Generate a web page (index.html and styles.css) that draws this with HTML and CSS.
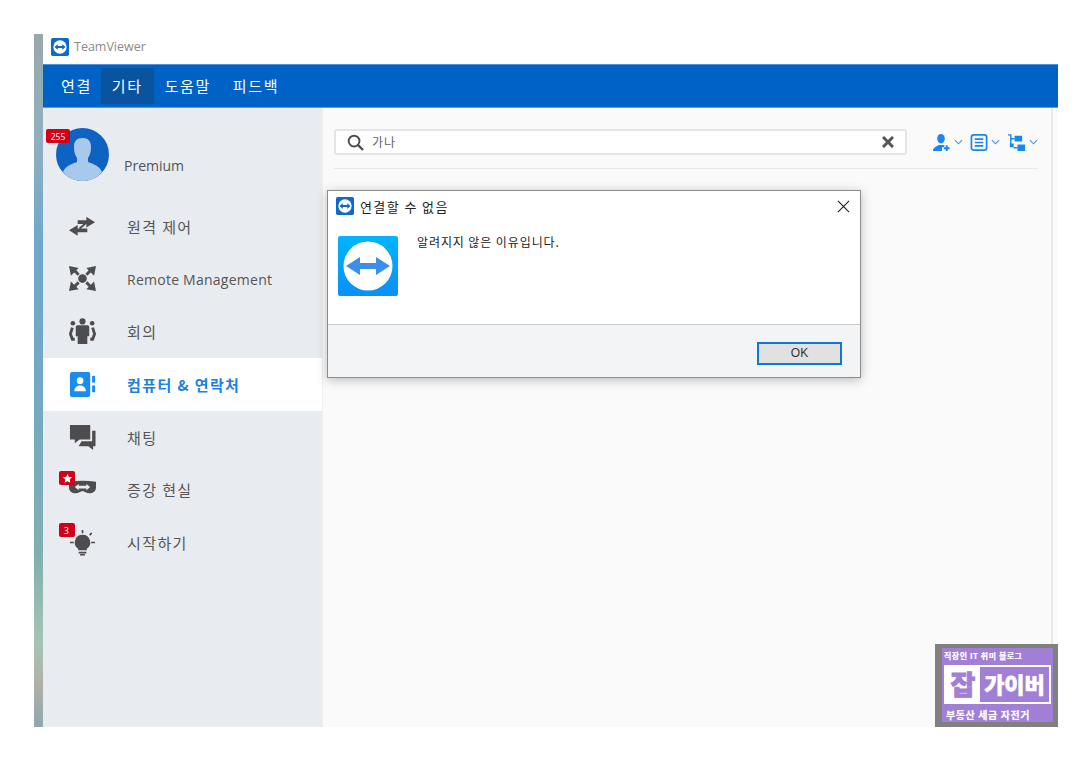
FILE: index.html
```html
<!DOCTYPE html>
<html>
<head>
    <meta charset="UTF-8">
    <title>TeamViewer</title>
    <link rel="stylesheet" href="styles.css">
</head>
<body>
    <div class="window">
        <div class="titlebar">
            <svg class="tv-small" viewBox="0 0 20 20">
                <rect width="20" height="20" rx="2" fill="#0e6ac8"/>
                <circle cx="10" cy="10" r="7.4" fill="#fff"/>
                <path d="M3.8 10 7.5 7v2h5V7l3.7 3-3.7 3v-2h-5v2z" fill="#0e6ac8"/>
            </svg>
            <span>TeamViewer</span>
        </div>
        <div class="menubar">
            <span class="menu">연결</span>
            <span class="menu active">기타</span>
            <span class="menu">도움말</span>
            <span class="menu">피드백</span>
        </div>
        <div class="content">
            <div class="sidebar">
                <div class="profile">
                    <svg class="avatar" viewBox="0 0 53 53">
                        <circle cx="26.5" cy="26.5" r="26.5" fill="#0e62c2"/>
                        <path d="M7 44c2-6 9-8 14-10v-4c-2-3-3-6-3-11 0-6 3-9 8.500-9s8.500 3 8.500 9c0 5-1 8-3 11v4c5 2 12 4 14 10-4 5-11 9-19.500 9S11 49 7 44z" fill="#a9c9ec"/>
                    </svg>
                    <span class="badge badge-count">255</span>
                    <span class="premium">Premium</span>
                </div>
                <div class="nav">
                    <div class="item">
                        <svg class="ico" viewBox="0 0 28 28">
                            <path d="M27 9.500 18 4v3.500H9v4h9V15zM0 18 9 12.500V16h10v4H9v3.500z" fill="#4d4d4f"/>
                            <path d="M11 16l6-5" stroke="#4d4d4f" stroke-width="2"/>
                        </svg>
                        <span>원격 제어</span>
                    </div>
                    <div class="item">
                        <svg class="ico" viewBox="0 0 28 28">
                            <circle cx="14" cy="13" r="4.500" fill="#4d4d4f"/>
                            <path d="M0 0l10 2-8 8zM28 0l-2 10-8-8zM0 26l2-10 8 8zM28 26l-10-2 8-8z" fill="#4d4d4f"/>
                            <path d="M5 4l5 5M23 4l-5 5M5 22l5-5M23 22l-5-5" stroke="#4d4d4f" stroke-width="3"/>
                        </svg>
                        <span class="latin">Remote Management</span>
                    </div>
                    <div class="item">
                        <svg class="ico" viewBox="0 0 28 28">
                            <circle cx="14" cy="3.500" r="3.200" fill="#4d4d4f"/>
                            <circle cx="4" cy="5.500" r="2.400" fill="#4d4d4f"/>
                            <circle cx="24" cy="5.500" r="2.400" fill="#4d4d4f"/>
                            <path d="M7 9.500c0-1.500 1-2 2-2h10c1 0 2 .5 2 2V19h-2v8H9v-8H7z" fill="#4d4d4f"/>
                            <path d="M3.500 10 1.500 16.500l2 5.500h2.500M24.500 10l2 6.500-2 5.500H22" fill="none" stroke="#4d4d4f" stroke-width="3"/>
                        </svg>
                        <span>회의</span>
                    </div>
                    <div class="item selected">
                        <svg class="ico" viewBox="0 0 28 28">
                            <rect x="1" y="1" width="21" height="26" rx="2" fill="#1a8cf0"/>
                            <rect x="24" y="5" width="3" height="7" fill="#1a8cf0"/>
                            <rect x="24" y="15" width="3" height="7" fill="#1a8cf0"/>
                            <circle cx="11.500" cy="10" r="3.500" fill="#fff"/>
                            <path d="M5.500 21c0-4 3-6 6-6s6 2 6 6z" fill="#fff"/>
                        </svg>
                        <span>컴퓨터 &amp; 연락처</span>
                    </div>
                    <div class="item">
                        <svg class="ico" viewBox="0 0 28 28">
                            <path d="M1 1h21v15H11l-5 4v-4H1z" fill="#4d4d4f"/>
                            <path d="M24 7h3.500v16H25v4l-5-4H10l3-5h11z" fill="#4d4d4f"/>
                        </svg>
                        <span>채팅</span>
                    </div>
                    <div class="item">
                        <svg class="ico" viewBox="0 0 28 28">
                            <path fill-rule="evenodd" d="M0 6c9-1.500 19-1.500 28 0v6c0 4-3 6-7 6-3 0-5-2.500-7-2.500S10 18 7 18c-4 0-7-2-7-6zM6 11.500l4 3.200V13h8v1.700l4-3.200-4-3.200V10h-8V8.300z" fill="#4d4d4f"/>
                        </svg>
                        <span class="badge badge-star">
                            <svg viewBox="0 0 12 12"><path d="M6 1l1.500 3.300 3.500.4-2.600 2.400.7 3.500L6 8.900l-3.100 1.700.7-3.500L1 4.700l3.500-.4z" fill="#fff"/></svg>
                        </span>
                        <span>증강 현실</span>
                    </div>
                    <div class="item">
                        <svg class="ico" viewBox="0 0 28 28">
                            <path d="M14 6a8 8 0 0 1 4.500 14.600V22h-9v-1.400A8 8 0 0 1 14 6z" fill="#4d4d4f"/>
                            <path d="M10 23.500h8v1.800h-8zM11.500 26h5v1.500h-5z" fill="#4d4d4f"/>
                            <path d="M14 1v3.500M1 14h4M23 14h4M21.500 6.500l2-2.500" stroke="#4d4d4f" stroke-width="1.800" fill="none"/>
                        </svg>
                        <span class="badge badge-num">3</span>
                        <span>시작하기</span>
                    </div>
                </div>
            </div>
            <div class="main">
                <div class="toolbar">
                    <div class="search">
                        <svg class="search-ico" viewBox="0 0 18 18">
                            <circle cx="7.500" cy="7.500" r="5.700" fill="none" stroke="#4d4d4f" stroke-width="2"/>
                            <path d="M11.500 11.500 17 17" stroke="#4d4d4f" stroke-width="2.400"/>
                        </svg>
                        <span class="search-text">가나</span>
                        <svg class="clear-ico" viewBox="0 0 12 12">
                            <path d="M1 1l10 10M11 1 1 11" stroke="#555" stroke-width="3"/>
                        </svg>
                    </div>
                    <div class="tools">
                        <svg class="tool" viewBox="0 0 20 20">
                            <ellipse cx="9.500" cy="6" rx="4" ry="5" fill="#1a86f0"/>
                            <path d="M1 19c0-4 4-5 6-6.500h5l1.500 1-1.500 1.500h-1.500V19z" fill="#1a86f0"/>
                            <path d="M15.500 13v6M12.500 16h6" stroke="#1a86f0" stroke-width="2"/>
                        </svg>
                        <svg class="chev" viewBox="0 0 10 6"><path d="M1 1l4 4 4-4" fill="none" stroke="#3f94e4" stroke-width="1.200"/></svg>
                        <svg class="tool" viewBox="0 0 20 20">
                            <rect x="1.500" y="2" width="16" height="16" rx="2.500" fill="none" stroke="#1a86f0" stroke-width="1.800"/>
                            <path d="M5 6.500h9M5 10h9M5 13.500h9" stroke="#1a86f0" stroke-width="1.700"/>
                        </svg>
                        <svg class="chev" viewBox="0 0 10 6"><path d="M1 1l4 4 4-4" fill="none" stroke="#3f94e4" stroke-width="1.200"/></svg>
                        <svg class="tool" viewBox="0 0 20 20">
                            <path d="M8 3h8v6H8zM11 12h8v7h-8zM3 11h4v4H3z" fill="#1a86f0"/>
                            <path d="M1 2h3v4h4M4 6v6M7 15.500h4" fill="none" stroke="#1a86f0" stroke-width="1.500"/>
                        </svg>
                        <svg class="chev" viewBox="0 0 10 6"><path d="M1 1l4 4 4-4" fill="none" stroke="#3f94e4" stroke-width="1.200"/></svg>
                    </div>
                </div>
            </div>
        </div>
    </div>

    <div class="dialog">
        <div class="dialog-title">
            <svg class="tv-small" viewBox="0 0 20 20">
                <rect width="20" height="20" rx="2" fill="#0e6ac8"/>
                <circle cx="10" cy="10" r="7.400" fill="#fff"/>
                <path d="M3.800 10 7.500 7v2h5V7l3.700 3-3.700 3v-2h-5v2z" fill="#0e6ac8"/>
            </svg>
            <span class="dialog-name">연결할 수 없음</span>
            <svg class="close" viewBox="0 0 14 14">
                <path d="M1 1l12 12M13 1 1 13" stroke="#222" stroke-width="1.200"/>
            </svg>
        </div>
        <div class="dialog-body">
            <svg class="tv-big" viewBox="0 0 60 60">
                <defs>
                    <linearGradient id="tvblue" x1="0" y1="0" x2="0" y2="1">
                        <stop offset="0" stop-color="#02b4fd"/>
                        <stop offset="1" stop-color="#0a90f7"/>
                    </linearGradient>
                </defs>
                <rect width="60" height="60" rx="2" fill="url(#tvblue)"/>
                <circle cx="30" cy="30" r="24.500" fill="#fff"/>
                <path d="M8 30 22 21v6h16v-6l14 9-14 9v-6H22v6z" fill="#3a8fec"/>
            </svg>
            <p class="dialog-msg">알려지지 않은 이유입니다.</p>
        </div>
        <div class="dialog-foot">
            <button class="ok">OK</button>
        </div>
    </div>

    <div class="stamp">
        <div class="stamp-inner">
            <div class="stamp-top">직장인 IT 취미 블로그</div>
            <div class="stamp-box">
                <span class="stamp-jab">잡</span>
                <span class="stamp-name">가이버</span>
            </div>
            <div class="stamp-bottom">부동산 세금 자전거</div>
        </div>
    </div>
</body>
</html>
```

FILE: styles.css
```css
html, body { margin: 0; padding: 0; }
body { width: 1092px; height: 761px; background: #fff; font-family: "Noto Sans CJK KR", "Noto Sans", sans-serif; position: relative; overflow: hidden; }

.window { margin: 34px 0 0 34px; width: 1024px; height: 693px; padding-left: 9px; box-sizing: border-box; display: flex; flex-direction: column; background: #fff linear-gradient(180deg, #9aa8ab 0%, #8fb0c0 15%, #6fa8cc 30%, #74a8c4 52%, #7fb0b0 75%, #a5c4b5 88%, #b0b0a5 94%, #8fa8b0 100%) no-repeat left top / 9px 100%; }

.titlebar { height: 30px; display: flex; align-items: center; padding: 0 0 5px 8px; box-sizing: border-box; gap: 5px; background: #fff; font-size: 12.500px; color: #8a8a8a; font-family: "Open Sans", sans-serif; }
.tv-small { width: 18px; height: 18px; flex: none; }

.menubar { height: 44px; box-sizing: border-box; background: #0062c4; border-top: 1px solid #4f93dc; border-bottom: 1px solid #5a9ae0; display: flex; align-items: center; padding-left: 7px; }
.menu { color: #fff; font-size: 15px; letter-spacing: 1.600px; height: 36px; line-height: 36px; padding: 0 11px; }
.menu:first-child { padding-right: 9px; }
.menu.active { background: #0a549f; }

.content { flex: 1; display: flex; min-height: 0; background: #fafafa; }
.sidebar { width: 279px; background: #e8ebf0; border-right: 1px solid #f0f0f0; flex: none; }
.profile { height: 92px; position: relative; }
.avatar { position: absolute; left: 13px; top: 20px; width: 53px; height: 53px; }
.premium { position: absolute; left: 81px; top: 48px; font-size: 14px; color: #555; font-family: "Open Sans", sans-serif; }
.badge { position: absolute; background: #d0021b; color: #fff; border-radius: 2px; display: flex; align-items: center; justify-content: center; }
.badge-count { left: 3px; top: 21px; width: 24px; height: 14px; font-size: 8.500px; font-family: "Open Sans", sans-serif; }
.badge-star { left: 16px; top: 8px; width: 16px; height: 14px; }
.badge-star svg { width: 11px; height: 11px; }
.badge-num { left: 16px; top: 7px; width: 16px; height: 14px; font-size: 9px; font-family: "Open Sans", sans-serif; }

.nav { display: flex; flex-direction: column; }
.item { height: 52.700px; display: flex; align-items: center; position: relative; padding-left: 26px; gap: 31px; font-size: 15px; letter-spacing: 1.400px; color: #555; }
.item .latin { font-family: "Open Sans", sans-serif; font-size: 14px; letter-spacing: 0.250px; }
.item.selected { background: #fff; color: #1a80e0; font-weight: 700; }
.ico { width: 27px; height: 27px; flex: none; }

.main { flex: 1; background: #fafafa; border-right: 2px solid #e8e8e8; margin-right: 6px; padding: 21px 13px 0 11px; }
.toolbar { display: flex; height: 39px; border-bottom: 1px solid #e9e9e9; gap: 25px; align-items: flex-start; }
.search { width: 573px; height: 26px; box-sizing: border-box; background: #fff; border: 2px solid #e3e4e6; border-radius: 3px; display: flex; align-items: center; padding: 0 11px; flex: none; }
.search-ico { width: 17px; height: 17px; flex: none; }
.search-text { margin: -2px 0 0 8px; font-size: 12px; letter-spacing: 1px; color: #666; flex: 1; }
.clear-ico { width: 12px; height: 12px; }
.tools { display: flex; align-items: center; height: 26px; }
.tool { width: 19px; height: 19px; flex: none; }
.chev { width: 9px; height: 6px; margin: 0 7px 0 2.500px; flex: none; }
.chev:last-child { margin-right: 0; }

.dialog { position: absolute; left: 327px; top: 190px; width: 534px; height: 188px; box-sizing: border-box; background: #fff; border: 1px solid #8c8c8c; box-shadow: 0 2px 10px rgba(0,0,0,0.25); display: flex; flex-direction: column; }
.dialog-title { height: 30px; display: flex; align-items: center; padding: 0 10px 0 8px; gap: 6px; flex: none; }
.dialog-name { flex: 1; font-size: 13px; letter-spacing: 1.400px; color: #222; }
.close { width: 13px; height: 13px; }
.dialog-body { flex: 1; display: flex; padding: 15px 0 0 10px; gap: 19px; align-items: flex-start; }
.tv-big { width: 60px; height: 60px; flex: none; }
.dialog-msg { margin: 0; font-size: 12px; line-height: 12px; letter-spacing: 0.900px; color: #222; }
.dialog-foot { height: 53px; flex: none; background: #f3f4f6; border-top: 1px solid #c8c8c8; display: flex; justify-content: flex-end; align-items: center; padding: 4px 18px 0 0; box-sizing: border-box; }
.ok { width: 85px; height: 23px; box-sizing: border-box; background: #e1e1e1; border: 2px solid #0f78d4; font-size: 12px; color: #333; font-family: "Liberation Sans", sans-serif; padding: 0; }

.stamp { position: absolute; left: 935px; top: 644px; width: 123px; height: 83px; box-sizing: border-box; background: #808080; padding: 4px 5px 5px 7px; }
.stamp-inner { background: #a07fd4; height: 100%; display: flex; flex-direction: column; justify-content: space-between; color: #fff; font-weight: 700; }
.stamp-top { font-size: 8px; line-height: 10px; letter-spacing: 0.500px; padding: 3px 0 0 2px; -webkit-text-stroke: 0.200px #fff; }
.stamp-box { width: 107px; height: 39px; box-sizing: border-box; margin-left: 2px; padding: 2px; background: #fff; display: flex; align-items: stretch; flex: none; }
.stamp-jab { width: 34px; color: #a07fd4; font-size: 27px; line-height: 33px; text-align: center; font-weight: 900; -webkit-text-stroke: 0.800px #a07fd4; }
.stamp-name { flex: 1; background: #a07fd4; color: #fff; font-size: 22px; line-height: 33px; text-align: center; font-weight: 900; -webkit-text-stroke: 0.500px #fff; }
.stamp-bottom { font-size: 10px; line-height: 13px; letter-spacing: 0.600px; padding: 0 0 1px 4px; -webkit-text-stroke: 0.200px #fff; }
```
